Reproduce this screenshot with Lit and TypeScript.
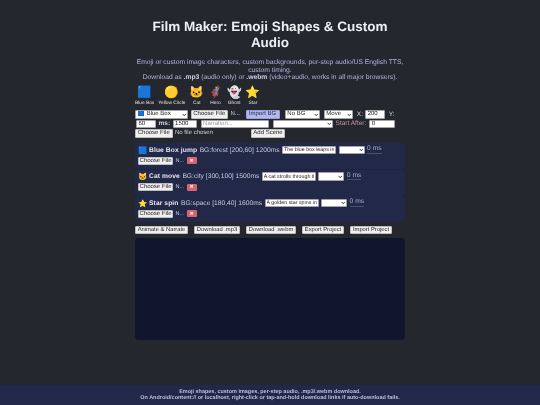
import { LitElement, html, css } from "lit";
import { customElement } from "lit/decorators.js";

const palette = [
  ["🟦", "Blue Box"],
  ["🟡", "Yellow Circle"],
  ["🐱", "Cat"],
  ["🦸", "Hero"],
  ["👻", "Ghost"],
  ["⭐", "Star"],
];
const scenes = [
  ["🟦", "Blue Box jump", "BG:forest [200,60] 1200ms", "The blue box leaps into the air"],
  ["🐱", "Cat move", "BG:city [300,100] 1500ms", "A cat strolls through the city"],
  ["⭐", "Star spin", "BG:space [180,40] 1600ms", "A golden star spins in space"],
];

@customElement("app-root")
export class AppRoot extends LitElement {
  static styles = css`
    :host { display: block; height: 405px; background: #24272e; font-family: "Liberation Sans", Arial, sans-serif; color: #e8e8ef; overflow: hidden; position: relative; text-rendering: geometricPrecision; filter: blur(0.2px); }
    .wrap { width: 270px; margin: 0 auto; padding-top: 19.25px; display: flex; flex-direction: column; }
    h1 { margin: 0; font-size: 13.5px; line-height: 15.5px; text-align: center; font-weight: 700; color: #eeeff2; }
    .sub { margin: 9px -4px 0; font-size: 6.75px; line-height: 7.6px; text-align: center; color: #b0b4de; }
    .sub b { font-weight: 700; color: #d0d2ea; }
    .palette { display: flex; gap: 4px; margin-top: 1.5px; height: 24px; align-items: flex-start; }
    .pal { display: flex; flex-direction: column; align-items: center; }
    .pal .e { font-size: 11.8px; line-height: 17px; }
    .pal .l { font-size: 4.8px; line-height: 6px; color: #e0e1e8; }
    .ctl { font-family: inherit; font-size: 6px; color: #222; background: #fff; border: 1px solid #a4a4a8; height: 8.5px; box-sizing: border-box; padding: 0 1.5px; margin: 0; border-radius: 1px; white-space: nowrap; overflow: hidden; flex: none; text-rendering: geometricPrecision; outline: none; }
    button.ctl { background: #efefef; border-color: #bdbdbd; padding: 0; text-align: center; }
    select.ctl { appearance: none; -webkit-appearance: none; width: 100%; display: block; }
    .sel { position: relative; display: block; flex: none; height: 8.5px; }
    .sel svg { position: absolute; right: 1.5px; top: 2.5px; width: 4.5px; height: 3.6px; pointer-events: none; }
    .import { background: #b4b9ec !important; color: #23264a; border-color: #979ddd !important; }
    input::placeholder { color: #9a9a9a; }
    .row { display: flex; align-items: center; font-size: 6px; color: #cfd1de; white-space: nowrap; height: 8.5px; }
    .form { margin-top: 2.5px; display: flex; flex-direction: column; gap: 1px; }
    .lab { color: #d0d2df; font-size: 6.5px; }
    .pink { color: #c4919f; font-size: 6.5px; }
    .list { margin-top: 5.5px; background: #1f2340; border-radius: 4px; display: flex; flex-direction: column; height: 79px; gap: 0.5px; overflow: hidden; }
    .scene { height: 26.5px; box-sizing: border-box; padding: 2.5px 3px 0; display: flex; flex-direction: column; gap: 2px; background: #222848; border-radius: 3px; }
    .top { display: flex; align-items: center; height: 9px; font-size: 6.7px; white-space: nowrap; color: #c9ccdd; }
    .top .em { font-size: 7.5px; line-height: 9px; width: 11px; }
    .top b { color: #e6e7f0; letter-spacing: .1px; margin-right: 2.5px; }
    .top input { font-size: 5.3px; padding: 0 1px; }
    .top u { text-decoration: none; border-bottom: 1px solid #4a4e70; color: #a9adc9; line-height: 6.5px; }
    .bot { display: flex; align-items: center; font-size: 5.5px; color: #c7c9d6; height: 8px; }
    .bot .ctl { height: 8px; }
    .x { background: #d9646f; color: #fff; width: 10px; height: 7px; border-radius: 1px; font-size: 4.5px; display: flex; align-items: center; justify-content: center; }
    .actions { display: flex; gap: 6px; margin-top: 3.5px; }
    .actions .ctl { font-size: 5.8px; }
    .canvas { margin-top: 4px; height: 102px; background: #12162c; border-radius: 4px; }
    footer { position: absolute; left: 0; right: 0; bottom: 0; height: 20px; background: #222849; color: #b9bddb; font-size: 5.47px; font-weight: 700; line-height: 6.3px; text-align: center; padding-top: 3.7px; box-sizing: border-box; }
    .w19 { width: 19.5px; } .w24 { width: 24px; } .w26 { width: 26px; } .w29 { width: 29px; } .w34 { width: 34px; } .w35 { width: 35px; } .w37 { width: 37.5px; } .w42 { width: 42px; } .w46 { width: 46px; } .w50 { width: 50px; } .w53 { width: 53px; } .w54 { width: 54px; } .w60 { width: 60px; } .w68 { width: 68px; }
    .ml1 { margin-left: 1px; } .ml2 { margin-left: 2.5px; } .ml22 { margin-left: 2.2px; } .ml3 { margin-left: 3px; } .ml4 { margin-left: 4px; } .ml5 { margin-left: 5.3px; } .ml57 { margin-left: 5.7px; } .ml38 { margin-left: 38px; }
    .fn { margin-left: 2.5px; }
  `;
  private sel(cls: string, text: string) {
    return html`<span class="sel ${cls}"><select class="ctl"><option>${text}</option></select><svg viewBox="0 0 10 8"><path d="M1.5 2 5 6 8.5 2" fill="none" stroke="#333" stroke-width="2"/></svg></span>`;
  }
  render() {
    return html`
      <div class="wrap">
        <h1>Film Maker: Emoji Shapes &amp; Custom Audio</h1>
        <div class="sub">Emoji or custom image characters, custom backgrounds, per-step audio/US English TTS, custom timing.<br>Download as <b>.mp3</b> (audio only) or <b>.webm</b> (video+audio, works in all major browsers).</div>
        <div class="palette">
          ${palette.map(([e, l]) => html`<div class="pal"><span class="e">${e}</span><span class="l">${l}</span></div>`)}
        </div>
        <div class="form">
          <div class="row">
            ${this.sel("w53", "🟦 Blue Box")}
            <button class="ctl w37 ml2">Choose File</button><span class="fn">N...</span>
            <button class="ctl import w34 ml57">Import BG</button>
            ${this.sel("w35 ml5", "No BG")}
            ${this.sel("w29 ml4", "Move")}
            <span class="lab ml4">X:</span><input class="ctl w19 ml22" value="200"><span class="lab ml4">Y:</span>
          </div>
          <div class="row">
            <input class="ctl w19 ml1" value="60"><span class="lab ml3"><b>ms:</b></span>
            <input class="ctl w24 ml2" value="1500">
            <input class="ctl w68 ml4" placeholder="Narration...">
            ${this.sel("w60 ml4", "")}
            <span class="pink ml3">Start After:</span><input class="ctl w26 ml3" value="0">
          </div>
          <div class="row">
            <button class="ctl w37">Choose File</button><span class="fn">No file chosen</span>
            <button class="ctl w34 ml38">Add Scene</button>
          </div>
        </div>
        <div class="list">
          ${scenes.map(([e, t, m, n]) => html`<div class="scene">
            <div class="top"><span class="em">${e}</span><b>${t}</b><span>${m}</span>
              <input class="ctl w54 ml2" .value=${n}>
              ${this.sel("w26 ml2", "")}<u class="ml2">0 ms</u></div>
            <div class="bot"><button class="ctl w35">Choose File</button><span class="fn">N...</span><span class="x ml2">✖</span></div>
          </div>`)}
        </div>
        <div class="actions">
          <button class="ctl w53">Animate &amp; Narrate</button>
          <button class="ctl w46">Download .mp3</button>
          <button class="ctl w50">Download .webm</button>
          <button class="ctl w42">Export Project</button>
          <button class="ctl w42">Import Project</button>
        </div>
        <div class="canvas"></div>
      </div>
      <footer>Emoji shapes, custom images, per-step audio, .mp3/.webm download.<br>On Android/content:// or localhost, right-click or tap-and-hold download links if auto-download fails.</footer>
    `;
  }
}
